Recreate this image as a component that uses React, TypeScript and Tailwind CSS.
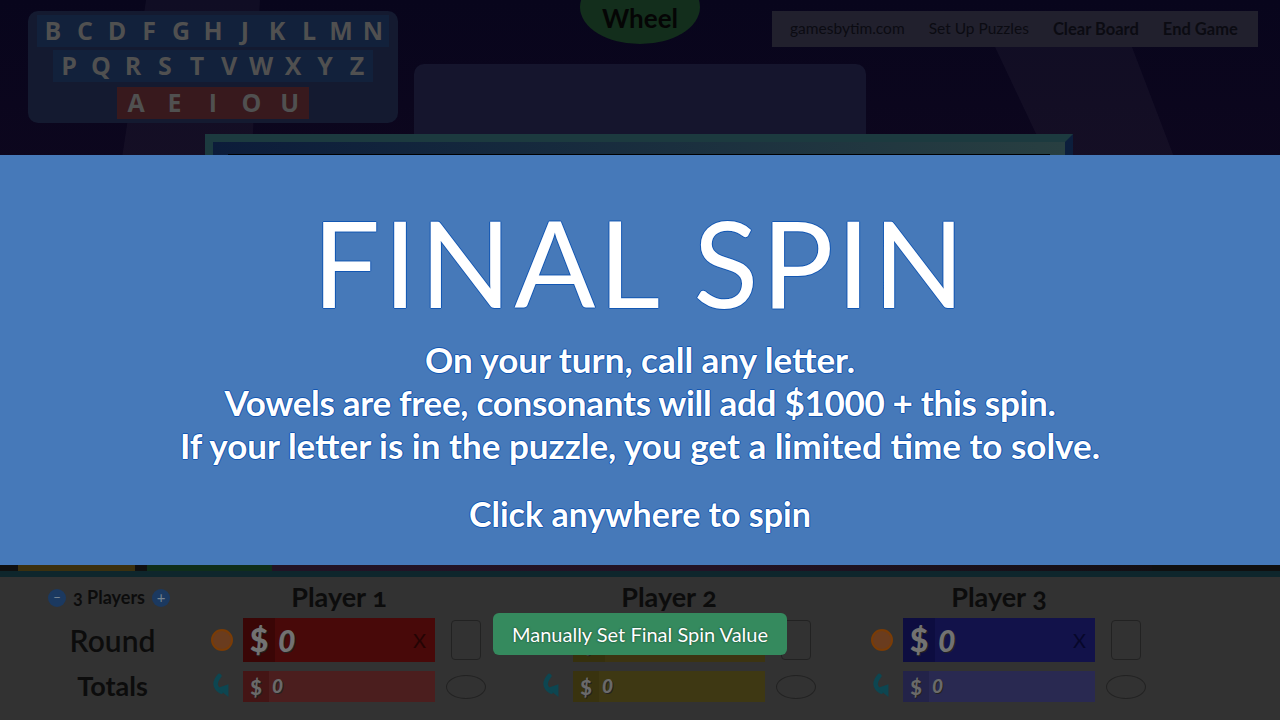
import React from "react";

const consonants1 = ["B", "C", "D", "F", "G", "H", "J", "K", "L", "M", "N"];
const consonants2 = ["P", "Q", "R", "S", "T", "V", "W", "X", "Y", "Z"];
const vowels = ["A", "E", "I", "O", "U"];

const players = [
    { name: "Player 1", round: "bg-[#480909]", roundTag: "bg-[#3a0606]", total: "bg-[#4b1e1e]", totalTag: "bg-[#441515]", x: "text-[#240404]" },
    { name: "Player 2", round: "bg-[#3c3411]", roundTag: "bg-[#36300d]", total: "bg-[#3e3813]", totalTag: "bg-[#39330f]", x: "text-[#1f1b06]" },
    { name: "Player 3", round: "bg-[#12124a]", roundTag: "bg-[#0d0d40]", total: "bg-[#292951]", totalTag: "bg-[#232349]", x: "text-[#07072a]" },
];

function LetterRow({ letters, cell, bg }: { letters: string[]; cell: string; bg: string }) {
    return (
        <div className={`flex h-[32px] ${bg}`}>
            {letters.map((l) => (
                <span
                    key={l}
                    className={`${cell} flex items-center justify-center text-[25px] font-bold text-[#505050] font-['Open_Sans',sans-serif]`}
                >
                    {l}
                </span>
            ))}
        </div>
    );
}

function TurnArrow() {
    return (
        <svg width="24" height="28" viewBox="0 0 24 28">
            <path d="M9 2 C3 9 4 15 11 19" fill="none" stroke="#0d4651" strokeWidth="5" strokeLinecap="round" />
            <path d="M7 15 L19 25 L19 11 Z" fill="#0d4651" />
        </svg>
    );
}

function PlayerColumn({ p }: { p: (typeof players)[number] }) {
    return (
        <div className="flex flex-col w-[330px]">
            <div className="h-[41px] flex items-center">
                <div className="ml-[32px] w-[192px] text-center text-[27px] font-bold text-[#0c0c0c] oldstyle-nums">
                    {p.name}
                </div>
            </div>
            <div className="flex items-center h-[44px]">
                <div className="w-[22px] h-[22px] rounded-full bg-[#6a3c1e] border-2 border-[#7a3c06] mr-[10px]" />
                <div className={`flex items-center w-[192px] h-[44px] ${p.round}`}>
                    <div className={`w-[32px] h-full flex items-center justify-center ${p.roundTag} text-[32px] font-black text-[#727272] [text-shadow:1px_1px_0_#222]`}>
                        $
                    </div>
                    <span className="ml-[3px] text-[30px] font-black italic text-[#727272] [text-shadow:1px_1px_0_#222]">0</span>
                    <span className={`ml-auto mr-[9px] text-[20px] ${p.x}`}>X</span>
                </div>
                <div className="ml-[16px] w-[30px] h-[40px] rounded-[4px] border border-[#222]" />
            </div>
            <div className="flex items-center h-[31px] mt-[9px]">
                <div className="w-[22px] mr-[10px] flex justify-center">
                    <TurnArrow />
                </div>
                <div className={`flex items-center w-[192px] h-[31px] ${p.total}`}>
                    <div className={`w-[26px] h-full flex items-center justify-center ${p.totalTag} text-[20px] font-black text-[#6a6a6a] [text-shadow:1px_1px_0_#222]`}>
                        $
                    </div>
                    <span className="ml-[3px] text-[19px] font-black italic text-[#6a6a6a] [text-shadow:1px_1px_0_#222]">0</span>
                </div>
                <div className="ml-[11px] w-[40px] h-[24px] rounded-[50%] border border-[#222]" />
            </div>
        </div>
    );
}

export default function App() {
    return (
        <div className="relative w-[1280px] h-[720px] overflow-hidden flex flex-col font-['Lato',sans-serif] bg-[#323232]">
            {/* dimmed game board */}
            <div className="relative h-[565px] bg-gradient-to-b from-[#08051c] to-[#190b22]">
                <svg className="absolute inset-0" width="1280" height="565">
                    <polygon points="146,0 260,0 230,565 60,565" fill="#ffffff" opacity="0.035" />
                    <polygon points="995,47 1132,47 1330,565 1240,565" fill="#ffffff" opacity="0.035" />
                </svg>
                <div className="relative flex items-start pl-[28px] pt-[11px]">
                    <div className="w-[370px] h-[112px] rounded-[10px] bg-[#141a30] flex flex-col items-center pt-[4px] gap-[3px]">
                        <LetterRow letters={consonants1} cell="w-[32px]" bg="bg-[#12213b]" />
                        <LetterRow letters={consonants2} cell="w-[32px]" bg="bg-[#12213b]" />
                        <div className="mt-[2px]">
                            <LetterRow letters={vowels} cell="w-[38.4px]" bg="bg-[#38191d]" />
                        </div>
                    </div>
                    <div className="flex flex-col">
                        <div className="flex items-start h-[36px]">
                            <div className="ml-[182px] mt-[-41px] w-[120px] h-[74px] rounded-[50%] bg-[#132e1c] flex items-end justify-center pb-[6px]">
                                <span className="text-[26px] font-bold text-[#050505]">Wheel</span>
                            </div>
                            <nav className="ml-[72px] w-[486px] h-[36px] bg-[#21202d] flex items-center pl-[18px] gap-[24px] text-[#0b0b12]">
                                <span className="text-[15.5px]">gamesbytim.com</span>
                                <span className="text-[15.5px]">Set Up Puzzles</span>
                                <span className="text-[16.5px] font-bold">Clear Board</span>
                                <span className="text-[16.5px] font-bold">End Game</span>
                            </nav>
                        </div>
                        <div className="ml-[16px] mt-[17px] w-[452px] h-[78px] rounded-t-[10px] bg-[#15152d]" />
                    </div>
                </div>
                <div className="relative ml-[205px] mt-[-8px] w-[868px] h-[60px] border-[8px] border-[#1c3a3f] border-r-[#0c1e3c] bg-gradient-to-r from-[#0c1c3a] to-[#283f41] pt-[12px] px-[15px]">
                    <div className="h-full bg-black" />
                </div>
            </div>
            <div className="h-[6px] bg-[#101010] flex">
                <div className="ml-[18px] w-[117px] bg-[#3b300f]" />
                <div className="ml-[12px] w-[125px] bg-[#0f2e1a]" />
                <div className="w-[880px] bg-gradient-to-r from-[#221324] via-[#231325] to-[#130f13]" />
            </div>
            <div className="h-[6px] bg-[#0e262c]" />
            <div className="flex-1 flex">
                <div className="w-[211px] flex flex-col">
                    <div className="h-[41px] flex items-center gap-[7px] pl-[48px]">
                        <span className="w-[18px] h-[18px] rounded-full bg-[#1b3960] flex items-center justify-center text-[#748290] text-[13px] leading-none">−</span>
                        <span className="text-[18px] font-bold text-[#0c0c0c] oldstyle-nums">3 Players</span>
                        <span className="w-[18px] h-[18px] rounded-full bg-[#1b3960] flex items-center justify-center text-[#748290] text-[15px] leading-none">+</span>
                    </div>
                    <div className="h-[44px] flex items-center justify-center pl-[14px] text-[30px] font-semibold text-[#0c0c0c]">Round</div>
                    <div className="h-[31px] mt-[9px] flex items-center justify-center pl-[14px] text-[27px] font-bold text-[#0c0c0c]">Totals</div>
                </div>
                {players.map((p) => (
                    <PlayerColumn key={p.name} p={p} />
                ))}
            </div>

            {/* final spin banner */}
            <div className="absolute left-0 right-0 top-[155px] h-[410px] bg-[#4679b9] flex flex-col items-center text-white [text-shadow:0_0_1px_#0b4fae,1px_0_0_#1458b4,-1px_0_0_#1458b4,0_1px_0_#1458b4,0_-1px_0_#1458b4]">
                <h1 className="mt-[42px] text-[120px] leading-[130px] font-normal tracking-[3px]">FINAL SPIN</h1>
                <div className="mt-[11px] flex flex-col items-center text-[35px] leading-[43px] font-bold">
                    <p>On your turn, call any letter.</p>
                    <p className="tracking-[-0.3px]">Vowels are free, consonants will add $1000 + this spin.</p>
                    <p>If your letter is in the puzzle, you get a limited time to solve.</p>
                </div>
                <p className="mt-[25px] text-[34px] leading-[43px] font-bold">Click anywhere to spin</p>
            </div>

            <button className="absolute left-[493px] top-[613px] w-[294px] h-[42px] rounded-[6px] bg-[#358a5e] text-white text-[20px] [text-shadow:0_0_2px_#0c3320]">
                Manually Set Final Spin Value
            </button>
        </div>
    );
}
